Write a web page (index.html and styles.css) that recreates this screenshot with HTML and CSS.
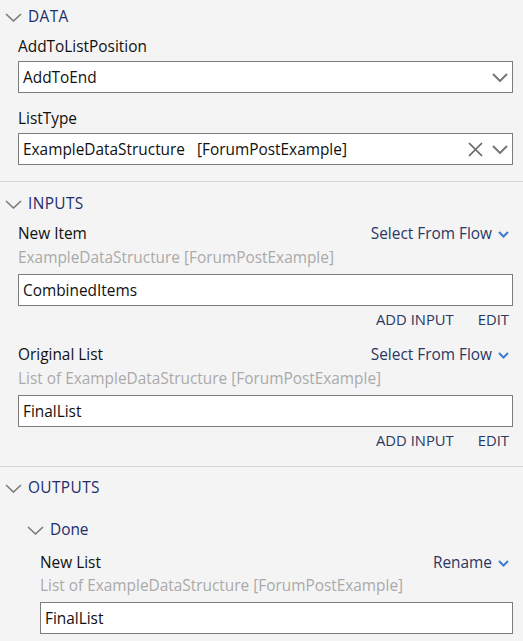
FILE: index.html
```html
<!DOCTYPE html>
<html>
<head>
<meta charset="utf-8">
<link rel="stylesheet" href="styles.css">
</head>
<body>
<div class="panel">
  <section class="section first">
    <div class="section-head">
      <svg class="head-chev" width="17" height="9" viewBox="0 0 17 9"><path d="M1 1L8.5 8L16 1"/></svg>
      <span>DATA</span>
    </div>
    <div class="field">
      <div class="label-row"><span class="label">AddToListPosition</span></div>
      <div class="input">
        <span class="value">AddToEnd</span>
        <span class="icons">
          <svg class="dd" width="16" height="9" viewBox="0 0 16 9"><path d="M1 1L8 8L15 1"/></svg>
        </span>
      </div>
    </div>
    <div class="field">
      <div class="label-row"><span class="label">ListType</span></div>
      <div class="input">
        <span class="value">ExampleDataStructure&nbsp;&nbsp;&nbsp;[ForumPostExample]</span>
        <span class="icons">
          <svg class="x" width="15" height="15" viewBox="0 0 15 15"><path d="M1 1L14 14M14 1L1 14"/></svg>
          <svg class="dd" width="16" height="9" viewBox="0 0 16 9"><path d="M1 1L8 8L15 1"/></svg>
        </span>
      </div>
    </div>
  </section>

  <section class="section">
    <div class="section-head">
      <svg class="head-chev" width="17" height="9" viewBox="0 0 17 9"><path d="M1 1L8.5 8L16 1"/></svg>
      <span>INPUTS</span>
    </div>
    <div class="field">
      <div class="label-row">
        <span class="label">New Item</span>
        <span class="link">Select From Flow <svg width="11" height="7" viewBox="0 0 11 7"><path d="M1 1L5.5 5.5L10 1"/></svg></span>
      </div>
      <div class="subtype">ExampleDataStructure [ForumPostExample]</div>
      <div class="input"><span class="value">CombinedItems</span></div>
      <div class="actions"><span>ADD INPUT</span><span>EDIT</span></div>
    </div>
    <div class="field">
      <div class="label-row">
        <span class="label">Original List</span>
        <span class="link">Select From Flow <svg width="11" height="7" viewBox="0 0 11 7"><path d="M1 1L5.5 5.5L10 1"/></svg></span>
      </div>
      <div class="subtype">List of ExampleDataStructure [ForumPostExample]</div>
      <div class="input"><span class="value">FinalList</span></div>
      <div class="actions"><span>ADD INPUT</span><span>EDIT</span></div>
    </div>
  </section>

  <section class="section last">
    <div class="section-head">
      <svg class="head-chev" width="17" height="9" viewBox="0 0 17 9"><path d="M1 1L8.5 8L16 1"/></svg>
      <span>OUTPUTS</span>
    </div>
    <div class="sub-head">
      <svg class="head-chev" width="17" height="9" viewBox="0 0 17 9"><path d="M1 1L8.5 8L16 1"/></svg>
      <span>Done</span>
    </div>
    <div class="field nested">
      <div class="label-row">
        <span class="label">New List</span>
        <span class="link">Rename <svg width="11" height="7" viewBox="0 0 11 7"><path d="M1 1L5.5 5.5L10 1"/></svg></span>
      </div>
      <div class="subtype">List of ExampleDataStructure [ForumPostExample]</div>
      <div class="input"><span class="value">FinalList</span></div>
    </div>
  </section>
</div>
</body>
</html>
```

FILE: styles.css
```css
* { box-sizing: border-box; }
html, body {
  margin: 0;
  padding: 0;
  background: #f4f4f4;
}
body {
  font-family: "Open Sans", Lato, sans-serif;
  font-size: 15.4px;
  color: #111;
  overflow: hidden;
}
.panel {
  display: flex;
  flex-direction: column;
  width: 523px;
}
.section {
  border-top: 1px solid #d6d6d6;
  padding: 12px 0 16px 0;
}
.section.first {
  border-top: none;
  padding-top: 7px;
}
.section.last {
  padding-top: 11px;
}
.section-head, .sub-head {
  display: flex;
  align-items: center;
  height: 20px;
  line-height: 20px;
  color: #222d6b;
  padding-left: 5px;
}
.section-head span {
  margin-left: 6px;
  letter-spacing: 0.4px;
}
.sub-head span {
  margin-left: 6px;
}
.head-chev path {
  fill: none;
  stroke: #7a7a7a;
  stroke-width: 1.6;
}
.sub-head {
  margin-top: 22px;
  padding-left: 27px;
}
.field {
  display: flex;
  flex-direction: column;
  padding: 0 10px 0 18px;
  margin-top: 16px;
}
.section-head + .field {
  margin-top: 10px;
}
.field.nested {
  padding-left: 40px;
  margin-top: 13px;
}
.label-row {
  display: flex;
  justify-content: space-between;
  align-items: center;
  line-height: 20px;
  height: 20px;
}
.label {
  color: #111;
}
.link {
  color: #2b3763;
  display: flex;
  align-items: center;
  gap: 6px;
  padding-right: 4px;
}
.link path {
  fill: none;
  stroke: #3b7cd0;
  stroke-width: 2;
}
.subtype {
  color: #aaaaaa;
  line-height: 20px;
  margin-top: 4px;
}
.nested .subtype {
  margin-top: 3px;
}
.input {
  display: flex;
  align-items: center;
  justify-content: space-between;
  height: 32px;
  margin-top: 6px;
  background: #fff;
  border: 1px solid #7d7d7d;
  padding: 0 4px 0 4px;
}
.field .label-row + .input {
  margin-top: 4px;
}
.value {
  white-space: pre;
}
.icons {
  display: flex;
  align-items: center;
  gap: 9px;
}
.dd path {
  fill: none;
  stroke: #777;
  stroke-width: 2;
}
.x path {
  fill: none;
  stroke: #666;
  stroke-width: 1.7;
}
.actions {
  display: flex;
  justify-content: flex-end;
  gap: 24px;
  font-size: 14.8px;
  line-height: 20px;
  margin-top: 3px;
  padding-right: 4px;
  color: #2b3763;
}
```
